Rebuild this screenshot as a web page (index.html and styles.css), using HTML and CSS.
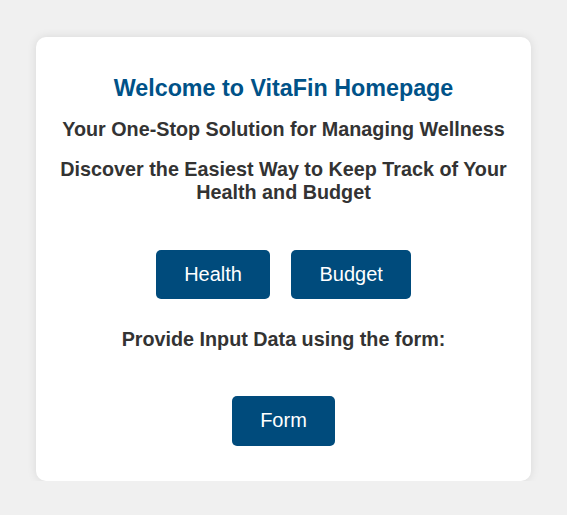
FILE: index.html
```html
<!DOCTYPE html>
<html lang="en">
<head>
<meta charset="utf-8">
<title>VitaFin</title>
<link rel="stylesheet" href="styles.css">
</head>
<body>
<div class="card">
  <h1 class="title">Welcome to VitaFin Homepage</h1>
  <p class="subtitle">Your One-Stop Solution for Managing Wellness</p>
  <p class="lead">Discover the Easiest Way to Keep Track of Your Health and Budget</p>
  <div class="actions">
    <a class="btn" href="#">Health</a>
    <a class="btn" href="#">Budget</a>
  </div>
  <p class="prompt">Provide Input Data using the form:</p>
  <div class="actions form-row">
    <a class="btn" href="#">Form</a>
  </div>
</div>
</body>
</html>
```
FILE: styles.css
```css
html, body {
  margin: 0;
  padding: 0;
}
body {
  background: #f0f0f0;
  font-family: "Liberation Sans", Arial, sans-serif;
  color: #333;
  padding-top: 37px;
}
.card {
  width: 495px;
  box-sizing: border-box;
  margin: 0 0 0 36px;
  background: #fff;
  border-radius: 10px;
  box-shadow: 0 0 10px rgba(0, 0, 0, 0.1);
  padding: 37.7px 20px 35.5px;
  text-align: center;
}
.title {
  margin: 0;
  font-size: 23.3px;
  line-height: 27px;
  font-weight: bold;
  color: #005288;
}
.subtitle {
  margin: 16.65px 0 0;
  font-size: 19.75px;
  line-height: 23px;
  font-weight: bold;
}
.lead {
  margin: 17px 0 0;
  font-size: 19.75px;
  line-height: 22.8px;
  font-weight: bold;
}
.actions {
  display: flex;
  justify-content: center;
  gap: 21.5px;
  margin-top: 45.6px;
}
.btn {
  display: block;
  background: #004b7c;
  color: #fff;
  text-decoration: none;
  font-size: 20px;
  line-height: 23px;
  padding: 13.4px 28px;
  border-radius: 5px;
}
.prompt {
  margin: 29.2px 0 0;
  font-size: 19.75px;
  line-height: 23px;
  font-weight: bold;
}
.form-row {
  margin-top: 44.5px;
}
```
